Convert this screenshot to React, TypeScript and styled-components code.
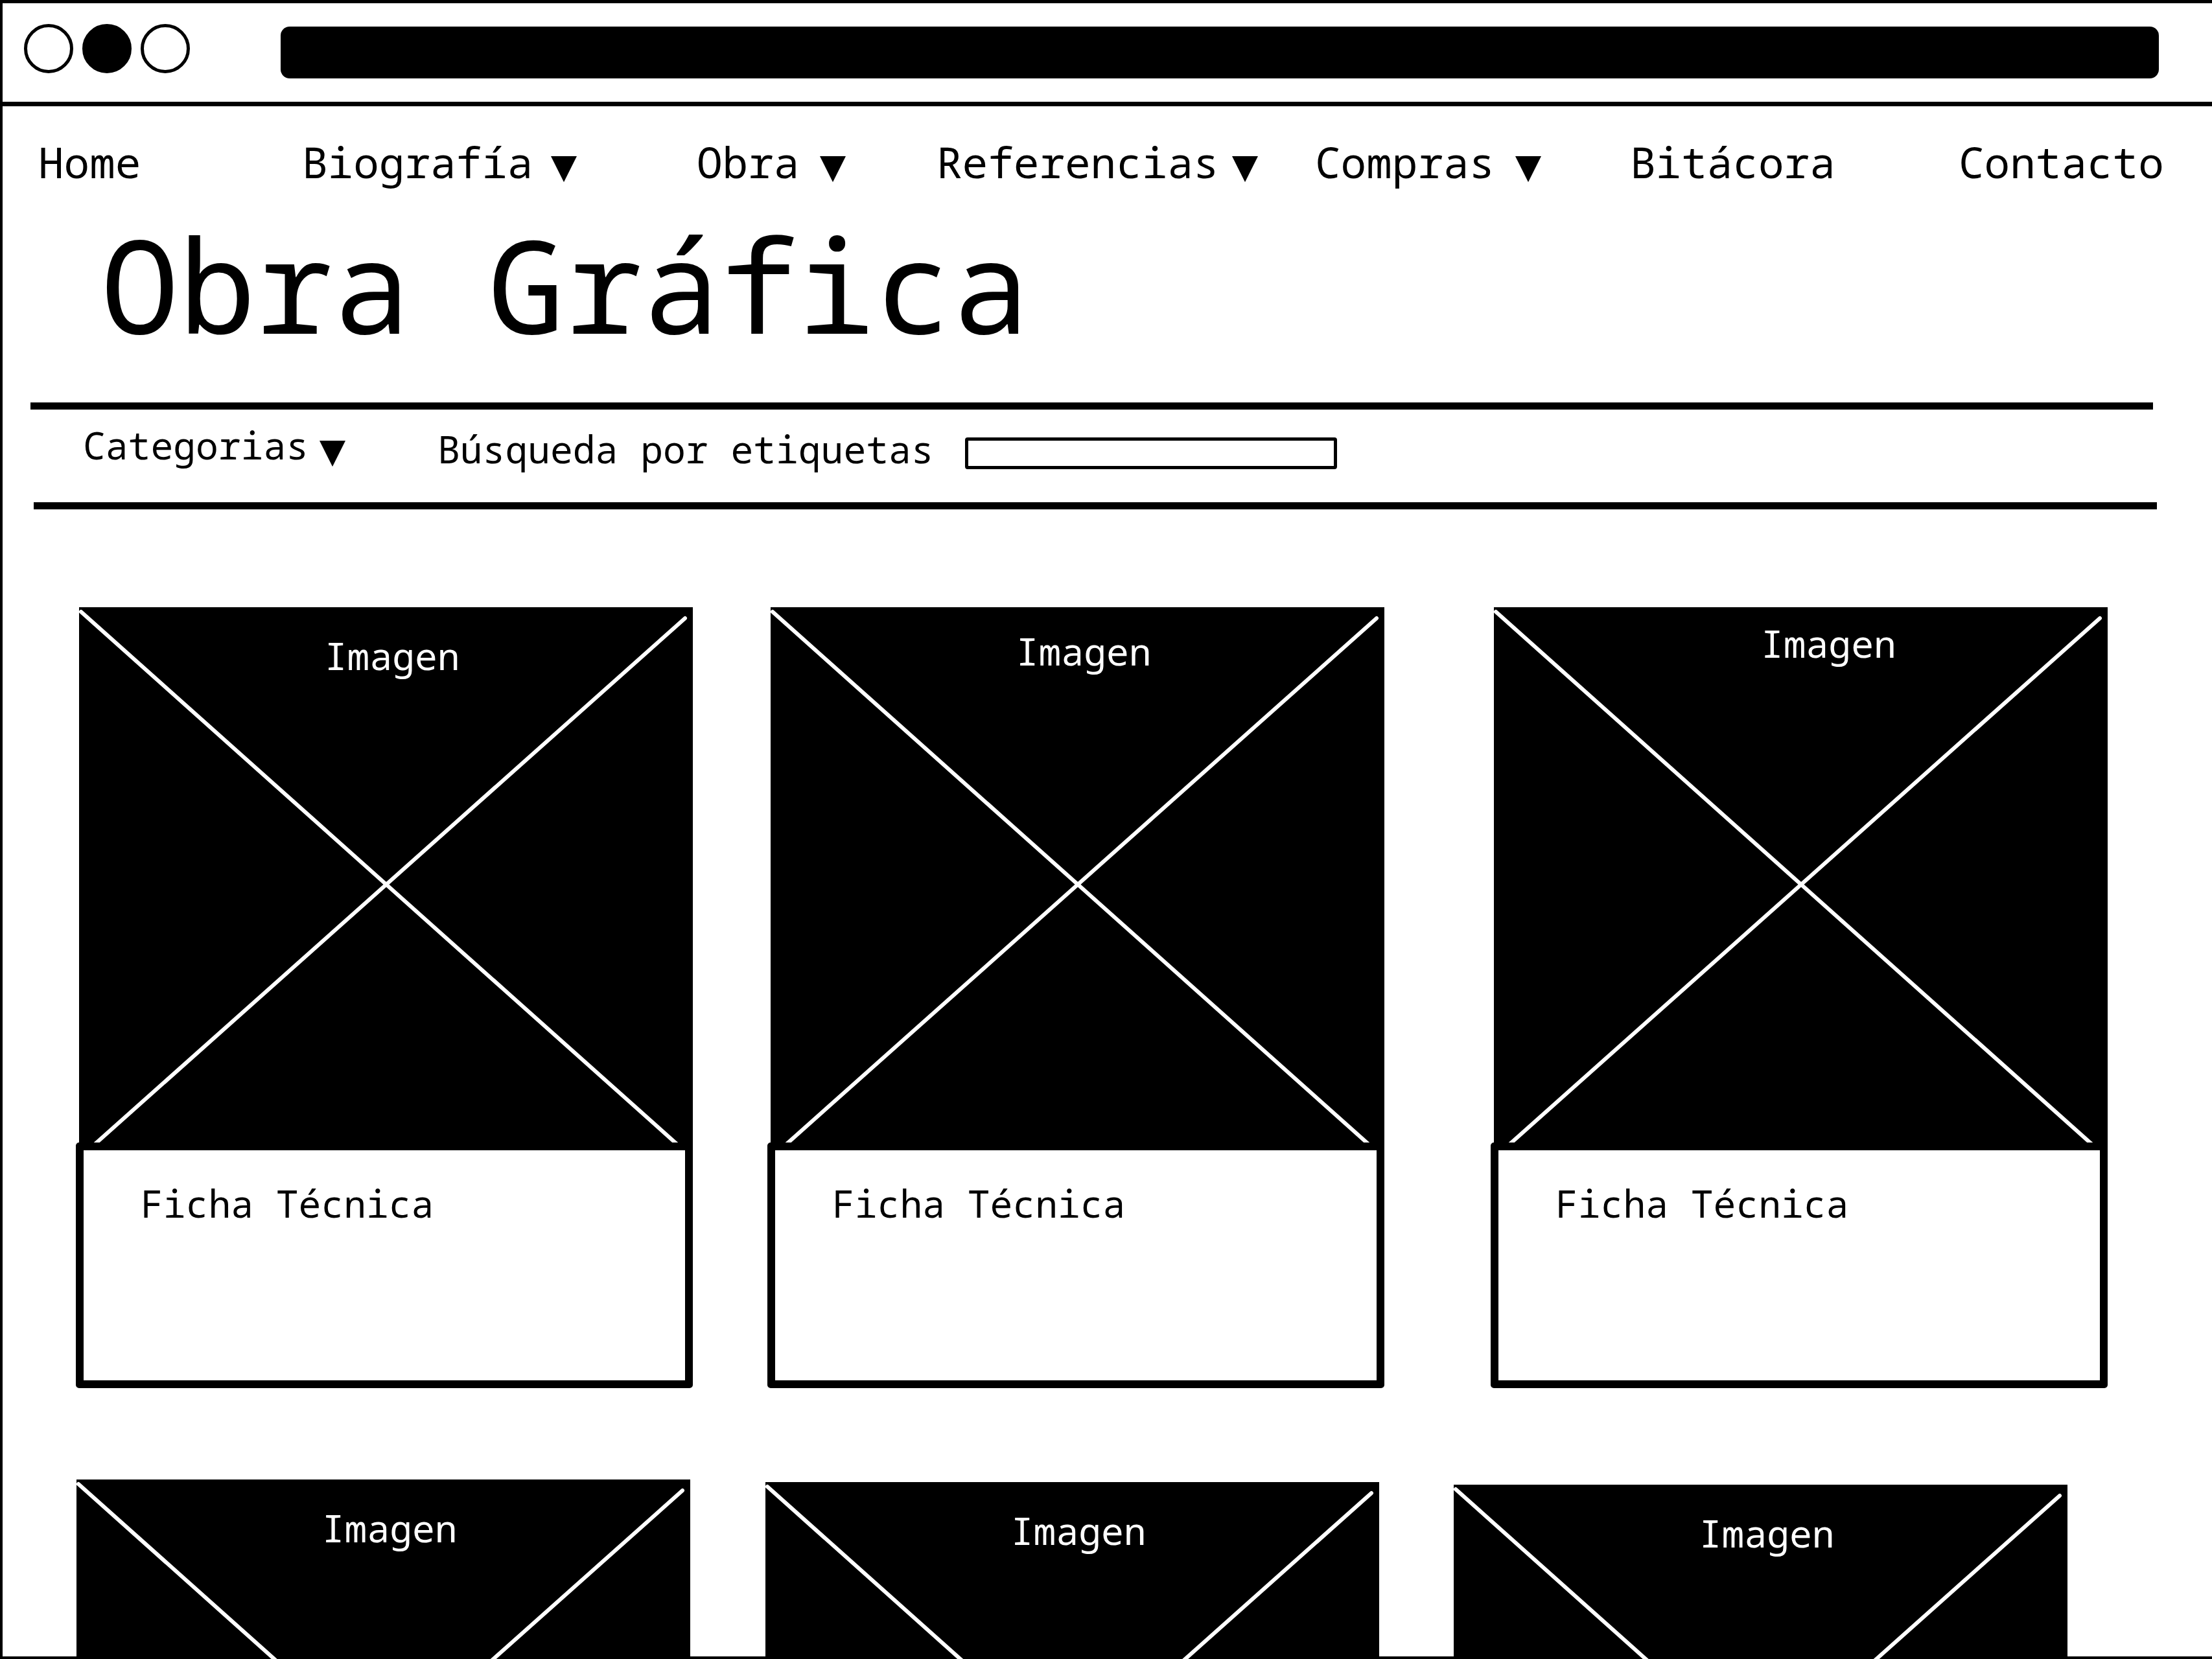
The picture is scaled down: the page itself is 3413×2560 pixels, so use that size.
import React from "react";
import styled, { createGlobalStyle } from "styled-components";

const GlobalStyle = createGlobalStyle`
  *, *::before, *::after { box-sizing: border-box; }
  body { margin: 0; background: #fff; }
  body, button, input {
    color: #000;
    font-family: "Droid Sans Mono", "Noto Sans Mono", "DejaVu Sans Mono", monospace;
  }
`;

const Frame = styled.div`
  height: 100vh;
  overflow: hidden;
  border: solid #000;
  border-width: 5px 0 0 4px;
  background: linear-gradient(#000, #000) bottom / 100% 4px no-repeat;
`;

const TitleBar = styled.header`
  display: flex;
  align-items: center;
  height: 159px;
  padding: 0 82px 0 33px;
  border-bottom: 7px solid #000;
`;

const Dots = styled.div`
  display: flex;
  flex: none;
  gap: 14px;
  margin-right: 140px;
  padding-bottom: 12px;
`;

const Dot = styled.button<{ $filled?: boolean }>`
  width: 76px;
  height: 76px;
  padding: 0;
  border: 5px solid #000;
  border-radius: 50%;
  background: ${(p) => (p.$filled ? "#000" : "#fff")};
`;

const Address = styled.input`
  flex: 1;
  min-width: 0;
  height: 80px;
  padding: 0 24px;
  border: 0;
  border-radius: 14px;
  background: #000;
  color: #fff;
  font-size: 48px;
`;

const Nav = styled.nav`
  display: grid;
  grid-template-columns: 407fr 609fr 370fr 584fr 486fr 507fr 391fr;
  padding: 45px 0 0 55px;
`;

const NavLink = styled.a`
  color: inherit;
  font-size: 66px;
  line-height: 80px;
  text-decoration: none;
`;

const MenuButton = styled.button<{ $gap: number; $size: number; $line: number }>`
  display: flex;
  align-items: flex-end;
  gap: ${(p) => p.$gap}px;
  padding: 0;
  border: 0;
  background: none;
  font-size: ${(p) => p.$size}px;
  line-height: ${(p) => p.$line}px;
  white-space: nowrap;
`;

const Arrow = styled.svg<{ $lift: number }>`
  flex: none;
  width: 40px;
  height: 40px;
  margin-bottom: ${(p) => p.$lift}px;
`;

const Title = styled.h1`
  margin: 49px 0 83px 152px;
  font-size: 199px;
  font-weight: 400;
  line-height: 200px;
`;

const Rule = styled.hr<{ $left: number; $right: number }>`
  height: 11px;
  margin: 0 ${(p) => p.$right}px 0 ${(p) => p.$left}px;
  border: 0;
  background: #000;
`;

const Toolbar = styled.div`
  display: flex;
  align-items: flex-start;
  gap: 142px;
  height: 143px;
  padding: 21px 0 0 124px;
`;

const Search = styled.form`
  display: flex;
  align-items: center;
  gap: 48px;
  padding-top: 6px;
`;

const SearchLabel = styled.label`
  font-size: 58px;
  line-height: 68px;
  white-space: nowrap;
`;

const SearchInput = styled.input`
  width: 574px;
  height: 49px;
  margin-top: 12px;
  padding: 0 12px;
  border: 5px solid #000;
  border-radius: 4px;
  background: #fff;
  font-size: 32px;
`;

const Gallery = styled.main`
  display: flex;
  flex-direction: column;
  gap: 141px;
  padding-top: 151px;
`;

const Row = styled.div<{ $tracks: string; $step: number }>`
  display: grid;
  grid-template-columns: ${(p) => p.$tracks};

  > :nth-child(1) { grid-column: 2; }
  > :nth-child(2) { grid-column: 4; margin-top: ${(p) => p.$step}px; }
  > :nth-child(3) { grid-column: 6; margin-top: ${(p) => p.$step * 2}px; }
`;

const Card = styled.article`
  min-width: 0;
`;

const Picture = styled.div`
  position: relative;
  height: 826px;
  margin-left: 5px;
  background: #000;
`;

const Cross = styled.svg`
  display: block;
  width: 100%;
  height: 100%;
`;

const Caption = styled.span<{ $left: string; $top: number }>`
  position: absolute;
  top: ${(p) => p.$top}px;
  left: ${(p) => p.$left};
  color: #fff;
  font-size: 58px;
  line-height: 68px;
`;

const Sheet = styled.div`
  height: 379px;
  padding: 48px 88px;
  border: 12px solid #000;
  border-radius: 5px 0 5px 5px;
  background: #fff;
`;

const SheetTitle = styled.h2`
  margin: 0;
  font-size: 58px;
  font-weight: 400;
  line-height: 68px;
`;

function Triangle({ lift }: { lift: number }) {
  return (
    <Arrow $lift={lift} viewBox="0 0 40 40" aria-hidden="true">
      <path d="M0 0H40L20 40Z" />
    </Arrow>
  );
}

type NavItem = { label: string; gap?: number };

const navItems: NavItem[] = [
  { label: "Home" },
  { label: "Biografía", gap: 28 },
  { label: "Obra", gap: 32 },
  { label: "Referencias", gap: 20 },
  { label: "Compras", gap: 32 },
  { label: "Bitácora" },
  { label: "Contacto" },
];

type Work = { left: string; top: number; sheet?: string };

const rows: { tracks: string; step: number; works: Work[] }[] = [
  {
    tracks: "113fr 952fr 115fr 952fr 164fr 952fr 161fr",
    step: 0,
    works: [
      { left: "40%", top: 41, sheet: "Ficha Técnica" },
      { left: "40%", top: 34, sheet: "Ficha Técnica" },
      { left: "43.5%", top: 22, sheet: "Ficha Técnica" },
    ],
  },
  {
    tracks: "109fr 952fr 111fr 952fr 110fr 952fr 223fr",
    step: 4,
    works: [
      { left: "40%", top: 41 },
      { left: "40%", top: 41 },
      { left: "40%", top: 41 },
    ],
  },
];

export default function App() {
  return (
    <>
      <GlobalStyle />
      <Frame>
        <TitleBar>
          <Dots>
            <Dot type="button" aria-label="Cerrar" />
            <Dot type="button" aria-label="Minimizar" $filled />
            <Dot type="button" aria-label="Maximizar" />
          </Dots>
          <Address type="text" aria-label="Dirección" />
        </TitleBar>

        <Nav>
          {navItems.map(({ label, gap }) =>
            gap === undefined ? (
              <NavLink key={label} href="#">{label}</NavLink>
            ) : (
              <MenuButton key={label} type="button" $gap={gap} $size={66} $line={80}>
                {label}
                <Triangle lift={8} />
              </MenuButton>
            )
          )}
        </Nav>

        <Title>Obra Gráfica</Title>

        <Rule $left={43} $right={91} />
        <Toolbar>
          <MenuButton type="button" $gap={17} $size={58} $line={68}>
            Categorias
            <Triangle lift={1} />
          </MenuButton>
          <Search>
            <SearchLabel htmlFor="tags">Búsqueda por etiquetas</SearchLabel>
            <SearchInput id="tags" type="text" />
          </Search>
        </Toolbar>
        <Rule $left={48} $right={85} />

        <Gallery>
          {rows.map((row, r) => (
            <Row key={r} $tracks={row.tracks} $step={row.step}>
              {row.works.map((work, w) => (
                <Card key={w}>
                  <Picture>
                    <Cross viewBox="0 0 947 826" preserveAspectRatio="none" aria-hidden="true">
                      <g stroke="#fff" strokeWidth="6" strokeLinecap="round">
                        <path d="M3 7L932 837" />
                        <path d="M935 17L16 836" />
                      </g>
                    </Cross>
                    <Caption $left={work.left} $top={work.top}>Imagen</Caption>
                  </Picture>
                  {work.sheet && (
                    <Sheet>
                      <SheetTitle>{work.sheet}</SheetTitle>
                    </Sheet>
                  )}
                </Card>
              ))}
            </Row>
          ))}
        </Gallery>
      </Frame>
    </>
  );
}
